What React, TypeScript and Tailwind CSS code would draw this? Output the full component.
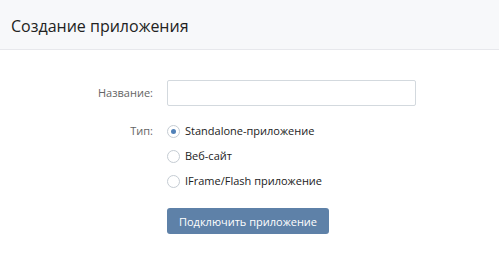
import React, { useState } from 'react';

const options = [
    { id: 'standalone', label: 'Standalone-приложение' },
    { id: 'site', label: 'Веб-сайт' },
    { id: 'iframe', label: 'IFrame/Flash приложение' },
];

export default function App() {
    const [name, setName] = useState('');
    const [type, setType] = useState('standalone');

    return (
        <div className="w-[499px] h-[259px] bg-white font-['Open_Sans',sans-serif] overflow-hidden">
            <div className="h-[50px] bg-[#f7f8fa] border-b border-[#e7e8ec] flex items-center px-[11px]">
                <h1 className="text-[16px] text-[#222] leading-none pt-[2px]">Создание приложения</h1>
            </div>

            <div className="pt-[30px] grid grid-cols-[153px_1fr] gap-x-[14px] text-[11px]">
                <div className="text-right text-[#656565] h-[26px] leading-[26px]">Название:</div>
                <div>
                    <input
                        type="text"
                        value={name}
                        onChange={(e) => setName(e.target.value)}
                        className="w-[249px] h-[26px] border border-[#d3d9de] rounded-[2px] px-2 outline-none text-[11px]"
                    />
                </div>

                <div className="text-right text-[#656565] mt-[15px] h-[20px] leading-[20px]">Тип:</div>
                <div className="mt-[15px] flex flex-col gap-[5px]">
                    {options.map((o) => (
                        <label
                            key={o.id}
                            onClick={() => setType(o.id)}
                            className="flex items-center gap-[5px] h-[20px] cursor-pointer text-[#222]"
                        >
                            <span className="w-[13px] h-[13px] rounded-full border border-[#c5ccd3] flex items-center justify-center">
                                {type === o.id && <span className="w-[5px] h-[5px] rounded-full bg-[#5181b8]" />}
                            </span>
                            {o.label}
                        </label>
                    ))}
                </div>

                <div />
                <div className="mt-[17px]">
                    <button className="w-[162px] h-[26px] bg-[#5e81a8] text-white rounded-[3px] text-[11px] leading-none">
                        Подключить приложение
                    </button>
                </div>
            </div>
        </div>
    );
}
